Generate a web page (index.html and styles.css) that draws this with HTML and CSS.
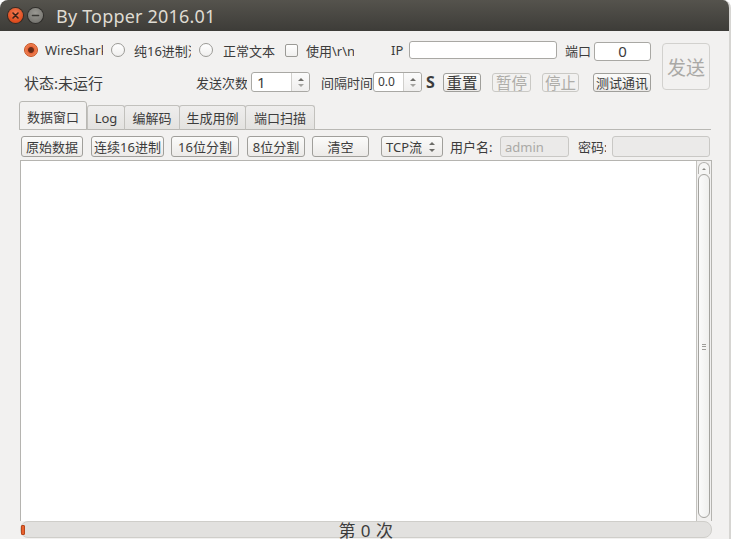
FILE: index.html
```html
<!DOCTYPE html>
<html lang="zh">
<head>
<meta charset="utf-8">
<title>By Topper 2016.01</title>
<link rel="stylesheet" href="styles.css">
</head>
<body>
<div class="window">
  <div class="titlebar">
    <span class="wbtn close"><svg width="15" height="15" viewBox="0 0 15 15"><path d="M5 5 L10 10 M10 5 L5 10" stroke="#3b2218" stroke-width="1.6" stroke-linecap="round"/></svg></span>
    <span class="wbtn min"><svg width="15" height="15" viewBox="0 0 15 15"><path d="M4.5 7.5 H10.5" stroke="#3a3935" stroke-width="1.6" stroke-linecap="round"/></svg></span>
    <span class="title">By Topper 2016.01</span>
  </div>
  <div class="content">
    <div class="top">
      <div class="top-left">
        <div class="row1">
          <span class="radio on"></span><span class="lbl l1">WireShark</span>
          <span class="radio r2"></span><span class="lbl l2">纯16进制流</span>
          <span class="radio r3"></span><span class="lbl l3">正常文本</span>
          <span class="check"></span><span class="lbl l4">使用\r\n</span>
          <span class="lbl ip">IP</span><span class="entry ipbox"></span>
          <span class="lbl port">端口</span><span class="entry portbox">0</span>
        </div>
        <div class="row2">
          <span class="status">状态:未运行</span>
          <span class="lbl cnt">发送次数</span>
          <span class="spin s1"><span class="val">1</span><span class="arrows"><i class="up"></i><i class="dn"></i></span></span>
          <span class="lbl intv">间隔时间</span>
          <span class="spin s2"><span class="val small">0.0</span><span class="arrows"><i class="up"></i><i class="dn"></i></span></span>
          <span class="unit">S</span>
          <span class="btn big b-reset">重置</span>
          <span class="btn big dis b-pause">暂停</span>
          <span class="btn big dis b-stop">停止</span>
          <span class="btn b-test">测试通讯</span>
        </div>
      </div>
      <span class="send">发送</span>
    </div>
    <div class="tabs">
      <span class="tab active t1">数据窗口</span>
      <span class="tab t2">Log</span>
      <span class="tab t3">编解码</span>
      <span class="tab t4">生成用例</span>
      <span class="tab t5">端口扫描</span>
    </div>
    <div class="toolbar">
      <span class="btn tb b1">原始数据</span>
      <span class="btn tb b2">连续16进制</span>
      <span class="btn tb b3">16位分割</span>
      <span class="btn tb b4">8位分割</span>
      <span class="btn tb b5">清空</span>
      <span class="btn tb combo">TCP流<span class="arrows2"><i class="up"></i><i class="dn"></i></span></span>
      <span class="lbl user">用户名:</span>
      <span class="entry disabled userbox">admin</span>
      <span class="lbl pass">密码:</span>
      <span class="entry disabled passbox"></span>
    </div>
    <div class="textarea">
      <div class="text"></div>
      <div class="scrollbar">
        <div class="sb-up"><i></i></div>
        <div class="slider"><span class="grip"></span></div>
      </div>
    </div>
    <div class="progress">
      <span class="chunk"></span>
      <span class="ptext">第 0 次</span>
    </div>
  </div>
</div>
</body>
</html>
```

FILE: styles.css
```css
* { box-sizing: border-box; }
html, body { margin: 0; padding: 0; }
body {
  width: 731px; height: 539px; overflow: hidden;
  background: #ffffff;
  font-family: "Noto Sans", "Noto Sans CJK SC", sans-serif;
  font-size: 13px; color: #3c3c3c;
}
.window {
  width: 731px; height: 539px;
  background: #f2f1f0;
  border-radius: 8px 8px 0 0;
  overflow: hidden;
  border-right: 2px solid #d6d5d2;
}
.titlebar {
  height: 31px;
  background: linear-gradient(#55534d, #3d3c38);
  display: flex; align-items: center;
  padding-left: 8px;
}
.wbtn {
  width: 15px; height: 15px; border-radius: 50%;
  display: flex; align-items: center; justify-content: center;
}
.wbtn.close {
  background: radial-gradient(circle at 50% 35%, #f57b53, #df4c1d 70%, #b23c15);
  box-shadow: 0 0 0 1px #3a2a22;
}
.wbtn.min {
  margin-left: 5px;
  background: radial-gradient(circle at 50% 35%, #9a9993, #7a7974 70%, #5f5e5a);
  box-shadow: 0 0 0 1px #2f2e2b;
}
.title {
  margin-left: 13px;
  color: #dfdbd2;
  font-family: "Noto Sans", sans-serif;
  font-size: 18px;
  letter-spacing: 0.2px;
  line-height: 1;
  margin-top: 1px;
}
.content { padding-left: 19px; }
.top { display: flex; align-items: flex-start; }
.top-left { width: 643px; }
.row1 {
  margin-top: 10px; height: 18px;
  display: flex; align-items: center;
  padding-left: 5px;
}
.radio {
  width: 14px; height: 14px; border-radius: 50%;
  border: 1px solid #9b9a96;
  background: linear-gradient(#ffffff, #f0efee);
  flex: none;
}
.radio.on {
  border-color: #c8501f;
  background: radial-gradient(circle, #5b2716 0, #6e2d17 2.5px, #e8663a 3.5px, #f08455 6px);
}
.check {
  width: 13px; height: 13px; border-radius: 2px;
  border: 1px solid #9b9a96;
  background: linear-gradient(#ffffff, #f0efee);
  flex: none;
}
.lbl { white-space: nowrap; overflow: hidden; flex: none; }
.l1 { width: 58px; margin-left: 7px; }
.r2 { margin-left: 8px; }
.l2 { width: 57px; margin-left: 9px; }
.r3 { margin-left: 8px; }
.l3 { margin-left: 10px; width: 53px; }
.check { margin-left: 9px; }
.l4 { margin-left: 8px; width: 48px; }
.ip { margin-left: 37px; width: 14px; }
.entry {
  height: 18px; border: 1px solid #a9a8a4; border-radius: 3px;
  background: #ffffff; flex: none;
  display: flex; align-items: center;
}
.ipbox { margin-left: 4px; width: 148px; }
.port { margin-left: 8px; width: 26px; }
.portbox { margin-left: 3px; width: 57px; height: 19px; justify-content: center; font-size: 15px; margin-top: 2px; }
.row2 {
  margin-top: 13px; height: 20px;
  display: flex; align-items: center;
  padding-left: 5px;
}
.status { font-size: 15px; width: 84px; flex: none; white-space: nowrap; }
.cnt { margin-left: 88px; width: 51px; }
.spin {
  height: 20px; border: 1px solid #a9a8a4; border-radius: 3px;
  background: #ffffff; flex: none;
  display: flex; align-items: stretch;
}
.s1 { margin-left: 4px; width: 59px; }
.s2 { margin-left: 0; width: 49px; }
.val { flex: 1; padding-left: 5px; font-size: 15px; line-height: 18px; }
.val.small { font-size: 12px; padding-left: 4px; }
.arrows {
  width: 18px; border-left: 1px solid #d0cfcc;
  background: linear-gradient(#fbfbfb, #efeeed);
  border-radius: 0 3px 3px 0;
  display: flex; flex-direction: column; align-items: center; justify-content: center; gap: 3px;
}
.up, .dn { display: block; width: 0; height: 0; border-left: 3px solid transparent; border-right: 3px solid transparent; }
.up { border-bottom: 3px solid #6d6c68; }
.dn { border-top: 3px solid #a4a3a0; }
.intv { margin-left: 11px; width: 52px; }
.unit { margin-left: 4px; font-size: 16px; font-weight: bold; width: 12px; flex: none; }
.btn {
  height: 19px; border: 1px solid #a09f9b; border-radius: 3px;
  background: linear-gradient(#fbfbfa, #eceae8);
  display: flex; align-items: center; justify-content: center;
  white-space: nowrap; flex: none; color: #3c3c3c;
}
.btn.big { font-size: 15.5px; }
.btn.dis { color: #aeada9; border-color: #cac9c5; background: #f2f1f0; }
.b-reset { margin-left: 5px; width: 38px; }
.b-pause { margin-left: 11px; width: 39px; }
.b-stop { margin-left: 11px; width: 37px; }
.b-test { margin-left: 14px; width: 58px; }
.send {
  margin-left: 0; margin-top: 12px;
  width: 48px; height: 47px;
  border: 1px solid #d2d1ce; border-radius: 4px;
  background: #f2f1f0;
  color: #aaa9a6; font-size: 19px;
  display: flex; align-items: center; justify-content: center;
}
.tabs {
  margin-top: 9px; height: 29px;
  display: flex; align-items: flex-end;
  border-bottom: 1px solid #b9b8b4;
  width: 692px;
}
.tab {
  height: 25px; margin-bottom: -1px;
  border: 1px solid #c2c1bd; border-bottom: 1px solid #b9b8b4;
  border-radius: 3px 3px 0 0;
  background: linear-gradient(#efeeed, #e3e2e0);
  display: flex; align-items: center; justify-content: center;
  white-space: nowrap; margin-left: -1px;
}
.tab.active {
  height: 29px; background: #f2f1f0; border-bottom-color: #f2f1f0;
  border-color: #b9b8b4; margin-left: 0; z-index: 1;
  padding-top: 1px;
}
.t1 { width: 68px; }
.t2 { width: 38px; margin-left: 0; }
.t3 { width: 56px; }
.t4 { width: 67px; }
.t5 { width: 70px; }
.toolbar {
  margin-top: 6px; height: 21px;
  display: flex; align-items: center;
  padding-left: 2px;
}
.tb { height: 21px; }
.b1 { width: 62px; }
.b2 { width: 73px; margin-left: 8px; }
.b3 { width: 68px; margin-left: 7px; }
.b4 { width: 58px; margin-left: 8px; }
.b5 { width: 57px; margin-left: 7px; }
.combo { width: 62px; margin-left: 12px; justify-content: flex-start; padding-left: 4px; }
.arrows2 { margin-left: 7px; display: flex; flex-direction: column; gap: 4px; }
.arrows2 .dn { border-top-color: #6d6c68; }
.user { margin-left: 7px; width: 44px; }
.entry.disabled { background: #ebeae9; border-color: #c9c8c5; color: #aaa9a6; height: 21px; }
.userbox { margin-left: 6px; width: 69px; padding-left: 4px; }
.pass { margin-left: 9px; width: 28px; }
.passbox { margin-left: 6px; width: 98px; }
.textarea {
  margin-top: 3px; margin-left: 1px;
  width: 692px; height: 361px;
  border: 1px solid #b5b4b0; border-bottom: none;
  background: #ffffff;
  display: flex;
}
.text { flex: 1; }
.scrollbar {
  width: 15px; border-left: 1px solid #c4c3bf;
  background: #f1f0ef;
  display: flex; flex-direction: column; align-items: center;
  padding-top: 1px;
}
.sb-up {
  width: 12px; height: 12px;
  border: 1px solid #b3b2ae; border-bottom: none; border-radius: 6px 6px 0 0;
  background: #f6f6f5;
  display: flex; justify-content: center; align-items: center;
}
.sb-up i { display: block; width: 0; height: 0; border-left: 2px solid transparent; border-right: 2px solid transparent; border-bottom: 2px solid #8a8985; }
.slider {
  width: 12px; flex: 1; margin-bottom: 3px;
  border: 1px solid #a4a39f; border-radius: 6px;
  background: linear-gradient(90deg, #fbfbfb, #efefee);
  display: flex; align-items: center; justify-content: center;
}
.grip {
  display: block; width: 4px; height: 6px;
  background: repeating-linear-gradient(#9e9d99 0 1px, transparent 1px 2.5px);
  margin-top: 2px;
}
.progress {
  margin-left: 1px; width: 692px; height: 17px;
  border: 1px solid #cfceca; border-radius: 8px;
  background: #e2e1df;
  position: relative;
  display: flex; align-items: center; justify-content: center;
}
.chunk {
  position: absolute; left: 0; top: 3px;
  width: 4px; height: 10px; border-radius: 1px;
  background: #e9622e; border: 1px solid #b8471c;
}
.ptext { font-size: 17px; line-height: 17px; color: #3c3c3c; margin-top: 2px; letter-spacing: 0.5px; }
```
